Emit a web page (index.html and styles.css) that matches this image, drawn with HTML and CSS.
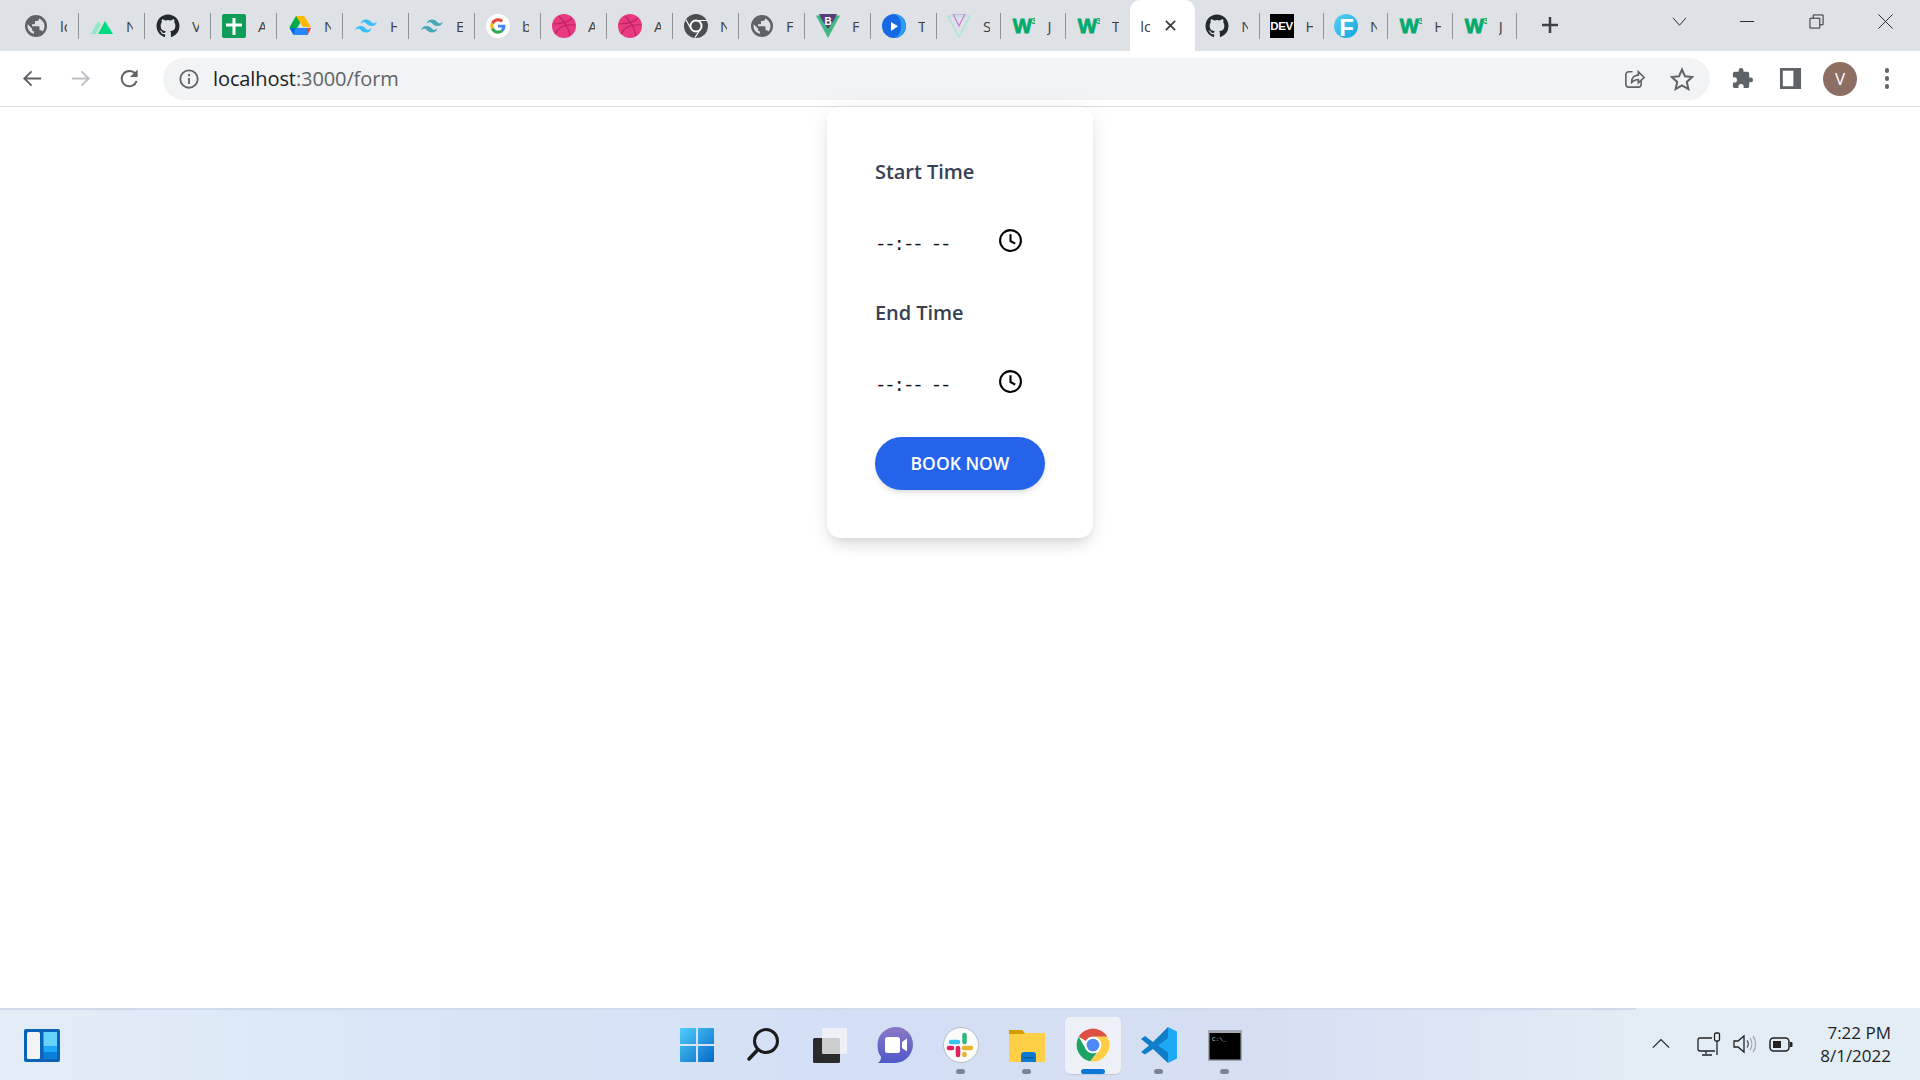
FILE: index.html
```html
<!DOCTYPE html>
<html lang="en">
<head>
<meta charset="utf-8">
<title>localhost:3000/form</title>
<link rel="stylesheet" href="styles.css">
</head>
<body>
<svg class="sprites" aria-hidden="true">
  <symbol id="i-globe" viewBox="0 0 24 24"><path fill="#5f6368" d="M12 1a11 11 0 100 22 11 11 0 000-22zM3.500 12c0-.6.1-1.200.2-1.800L8 14.500v1c0 1.100.9 2 2 2v2.200c-3.700-.6-6.500-3.800-6.500-7.700zm14.900 5.600c-.3-.8-1-1.400-1.900-1.400h-1v-3c0-.6-.4-1-1-1H8v-2h2c.6 0 1-.4 1-1V7h2c1.100 0 2-.9 2-2v-.4c3 1.200 5.500 4 5.500 7.400 0 2.100-.8 4.200-2.100 5.600z"/></symbol>
  <symbol id="i-nuxt" viewBox="0 0 24 24"><path fill="#8fe9c5" d="M1 20 8 7l3 3-5 10z"/><path fill="#00dc82" d="M8 20 15 7l8 13z"/></symbol>
  <symbol id="i-gh" viewBox="0 0 24 24"><path fill="#24292f" d="M12 .5C5.650.5.500 5.650.500 12c0 5.080 3.290 9.390 7.860 10.910.570.110.790-.250.790-.550v-2.140c-3.200.700-3.870-1.360-3.870-1.360-.520-1.330-1.280-1.690-1.280-1.690-1.040-.710.080-.700.080-.700 1.150.080 1.760 1.190 1.760 1.190 1.030 1.760 2.690 1.250 3.350.960.100-.750.400-1.250.730-1.540-2.560-.290-5.250-1.280-5.250-5.700 0-1.260.450-2.290 1.190-3.100-.120-.290-.520-1.460.110-3.050 0 0 .970-.310 3.170 1.180a11 11 0 015.770 0c2.200-1.490 3.170-1.180 3.170-1.180.630 1.590.230 2.760.110 3.050.740.810 1.190 1.840 1.190 3.100 0 4.430-2.700 5.410-5.270 5.690.410.360.780 1.060.780 2.140v3.170c0 .310.210.670.790.550A11.500 11.500 0 0023.500 12C23.500 5.650 18.350.5 12 .5z"/></symbol>
  <symbol id="i-plus" viewBox="0 0 24 24"><rect width="24" height="24" rx="2" fill="#0f9d58"/><path fill="#fff" d="M10.500 4h3v5.500H20v3h-6.500V21h-3v-8.500H4v-3h6.500z"/></symbol>
  <symbol id="i-drive" viewBox="0 0 24 24"><path fill="#00ac47" d="M8 2h8L6 20l-4.500-7z"/><path fill="#ffba00" d="M8 2h8l7 11h-8z"/><path fill="#2684fc" d="M5.500 14H23l-3.500 7H5.500z"/><path fill="#ea4335" d="M19 14h4l-3.500 7z"/><path fill="#0066da" d="M1.500 14h6l-2 7z"/></symbol>
  <symbol id="i-tw" viewBox="0 0 24 24"><path d="M12 5.500c-3 0-4.800 1.500-5.500 4.500 1.100-1.500 2.400-2 3.900-1.700.9.200 1.400.800 2.100 1.500 1 1 2.300 2.200 5 2.200 3 0 4.800-1.500 5.500-4.500-1.100 1.500-2.400 2-3.900 1.700-.9-.2-1.400-.8-2.100-1.500-1-1-2.300-2.200-5-2.200zM6.500 12c-3 0-4.800 1.500-5.500 4.500 1.100-1.500 2.400-2 3.900-1.700.9.200 1.400.800 2.100 1.500 1 1 2.300 2.200 5 2.200 3 0 4.800-1.500 5.500-4.500-1.100 1.500-2.400 2-3.900 1.700-.9-.2-1.400-.8-2.100-1.500-1-1-2.300-2.200-5-2.200z"/></symbol>
  <symbol id="i-google" viewBox="0 0 24 24"><circle cx="12" cy="12" r="12" fill="#fff"/><g transform="translate(4.300 4.300) scale(.32)"><path fill="#ea4335" d="M24 9.500c3.540 0 6.710 1.220 9.210 3.600l6.850-6.850C35.900 2.380 30.470 0 24 0 14.620 0 6.510 5.380 2.560 13.220l7.980 6.190C12.430 13.720 17.740 9.500 24 9.500z"/><path fill="#4285f4" d="M46.980 24.550c0-1.570-.15-3.090-.38-4.550H24v9.020h12.940c-.58 2.960-2.260 5.480-4.780 7.180l7.730 6c4.510-4.180 7.090-10.360 7.090-17.650z"/><path fill="#fbbc05" d="M10.530 28.590c-.48-1.450-.76-2.990-.76-4.590s.27-3.140.76-4.590l-7.980-6.190C.92 16.460 0 20.120 0 24c0 3.880.92 7.540 2.560 10.780l7.970-6.190z"/><path fill="#34a853" d="M24 48c6.480 0 11.930-2.130 15.890-5.810l-7.730-6c-2.150 1.450-4.920 2.300-8.160 2.300-6.260 0-11.570-4.220-13.470-9.910l-7.980 6.190C6.510 42.620 14.620 48 24 48z"/></g></symbol>
  <symbol id="i-dribbble" viewBox="0 0 24 24"><circle cx="12" cy="12" r="12" fill="#e9397f"/><path fill="none" stroke="#b9225f" stroke-width="1.100" d="M7 2c5 5 10 13 11 20M1 10c8 0 15-2 19-6M3 20c3-6 10-10 20-9"/></symbol>
  <symbol id="i-chrome-gray" viewBox="0 0 24 24"><circle cx="12" cy="12" r="12" fill="#4a4d51"/><circle cx="12" cy="12" r="6.500" fill="#fff"/><circle cx="12" cy="12" r="4.600" fill="#4a4d51"/><path stroke="#fff" stroke-width="1.200" d="M12 6.500h11M7 15 1.800 5.500M16.500 15 11 23.500"/></symbol>
  <symbol id="i-bvue" viewBox="0 0 24 24"><path fill="#41b883" d="M0 1.500h24L12 24z"/><path fill="#fff" d="M5.500 1.500h13L12 13.500z"/><path fill="#563d7c" d="M3 0h18l-3 6-6 9-6-9z"/><text x="12" y="10.500" class="bv-text">B</text></symbol>
  <symbol id="i-play" viewBox="0 0 24 24"><circle cx="12" cy="12" r="12" fill="#1668e3"/><path fill="#2c9bf0" d="M12 0a12 12 0 010 24c5-2 7-6 7-12S17 2 12 0z"/><path fill="#fff" d="M9 8l7 4.300L9 17z"/></symbol>
  <symbol id="i-vue" viewBox="0 0 24 24"><path fill="none" stroke="#a4e6d5" stroke-width="1.200" d="M1 2h22L12 23z"/><path fill="none" stroke="#c57fe0" stroke-width="1.200" d="M6 0h12l-6 12z"/></symbol>
  <symbol id="i-w3" viewBox="-3 0 26 24"><text x="-1" y="19.500" class="w3-w">W</text><text x="19" y="9.500" class="w3-3">3</text></symbol>
  <symbol id="i-clock" viewBox="0 0 24 24"><circle cx="12" cy="12" r="10" fill="none" stroke="#000" stroke-width="2"/><path fill="none" stroke="#000" stroke-width="2" d="M12 6v6.500l4.500 2.500"/></symbol>
</svg>

<div class="browser">
  <header class="tabstrip">
    <div class="tab"><svg class="fav"><use href="#i-globe"/></svg><span class="tab-title">lo</span></div>
    <div class="tab"><svg class="fav"><use href="#i-nuxt"/></svg><span class="tab-title">N</span></div>
    <div class="tab"><svg class="fav"><use href="#i-gh"/></svg><span class="tab-title">V</span></div>
    <div class="tab"><svg class="fav"><use href="#i-plus"/></svg><span class="tab-title">A</span></div>
    <div class="tab"><svg class="fav"><use href="#i-drive"/></svg><span class="tab-title">N</span></div>
    <div class="tab"><svg class="fav tw-sky"><use href="#i-tw"/></svg><span class="tab-title">H</span></div>
    <div class="tab"><svg class="fav tw-teal"><use href="#i-tw"/></svg><span class="tab-title">E</span></div>
    <div class="tab"><svg class="fav"><use href="#i-google"/></svg><span class="tab-title">b</span></div>
    <div class="tab"><svg class="fav"><use href="#i-dribbble"/></svg><span class="tab-title">A</span></div>
    <div class="tab"><svg class="fav"><use href="#i-dribbble"/></svg><span class="tab-title">A</span></div>
    <div class="tab"><svg class="fav"><use href="#i-chrome-gray"/></svg><span class="tab-title">N</span></div>
    <div class="tab"><svg class="fav"><use href="#i-globe"/></svg><span class="tab-title">F</span></div>
    <div class="tab"><svg class="fav"><use href="#i-bvue"/></svg><span class="tab-title">F</span></div>
    <div class="tab"><svg class="fav"><use href="#i-play"/></svg><span class="tab-title">T</span></div>
    <div class="tab narrow"><svg class="fav"><use href="#i-vue"/></svg><span class="tab-title">S</span></div>
    <div class="tab narrow"><svg class="fav"><use href="#i-w3"/></svg><span class="tab-title">J</span></div>
    <div class="tab narrow no-sep"><svg class="fav"><use href="#i-w3"/></svg><span class="tab-title">T</span></div>
    <div class="tab active"><span class="tab-title">lo</span><svg class="tab-close" viewBox="0 0 14 14"><path d="M2 2l10 10M12 2L2 12"/></svg></div>
    <div class="tab narrow"><svg class="fav"><use href="#i-gh"/></svg><span class="tab-title">N</span></div>
    <div class="tab narrow"><span class="fav dev">DEV</span><span class="tab-title">H</span></div>
    <div class="tab narrow"><svg class="fav" viewBox="0 0 24 24"><defs><linearGradient id="g-fr" x1="0" y1="0" x2="1" y2="1"><stop offset="0" stop-color="#5fd0f2"/><stop offset="1" stop-color="#0ea4dc"/></linearGradient></defs><circle cx="12" cy="12" r="12" fill="url(#g-fr)"/><text x="12.500" y="22" class="fr-text">F</text></svg><span class="tab-title">N</span></div>
    <div class="tab narrow"><svg class="fav"><use href="#i-w3"/></svg><span class="tab-title">H</span></div>
    <div class="tab narrow"><svg class="fav"><use href="#i-w3"/></svg><span class="tab-title">J</span></div>
    <svg class="new-tab" viewBox="0 0 18 18"><path d="M9 1v16M1 9h16"/></svg>
    <div class="window-controls">
      <svg class="win-btn" viewBox="0 0 16 16"><path d="M1 4l7 8 7-8"/></svg>
      <svg class="win-btn" viewBox="0 0 16 16"><path d="M0 8h15"/></svg>
      <svg class="win-btn" viewBox="0 0 16 16"><path d="M1 4.500h10.500V15H1zM4.500 4.500V1H15v10.500h-3.500"/></svg>
      <svg class="win-btn" viewBox="0 0 16 16"><path d="M.5.500l15 15M15.500.5l-15 15"/></svg>
    </div>
  </header>

  <nav class="toolbar">
    <svg class="tool back" viewBox="0 0 24 24"><path d="M21 12H4M11 4.500 3.500 12l7.500 7.500"/></svg>
    <svg class="tool forward" viewBox="0 0 24 24"><path d="M3 12h17M13 4.500l7.500 7.500-7.500 7.500"/></svg>
    <svg class="tool reload" viewBox="0 0 24 24"><path d="M19.500 14.500A8 8 0 1 1 18 7"/><path class="solid" d="M20.500 2.500v8h-8z"/></svg>
    <div class="omnibox">
      <svg class="tool info" viewBox="0 0 24 24"><circle cx="12" cy="12" r="9.500"/><path d="M12 11v6.500M12 6.500v2.500"/></svg>
      <div class="url"><span class="url-host">localhost</span>:3000/form</div>
      <svg class="tool share" viewBox="0 0 24 24"><path d="M10 5H6a3 3 0 0 0-3 3v10a3 3 0 0 0 3 3h10a3 3 0 0 0 3-3v-4"/><path d="M9 16c0-5 3-7.500 7-7.500V5l6 6-6 5.500V13c-3 0-5 1-7 3z"/></svg>
      <svg class="tool star" viewBox="0 0 24 24"><path d="M12 2.500l3 6.800 7.200.7-5.400 4.900 1.600 7.200L12 18.400l-6.400 3.700 1.600-7.200L1.800 10l7.200-.7z"/></svg>
    </div>
    <svg class="tool puzzle" viewBox="0 0 24 24"><path class="solid" d="M20.500 11H19V7a2 2 0 0 0-2-2h-4V3.500a2.500 2.500 0 0 0-5 0V5H4a2 2 0 0 0-2 2v3.800h1.500a2.700 2.700 0 0 1 0 5.400H2V20a2 2 0 0 0 2 2h3.800v-1.500a2.700 2.700 0 0 1 5.400 0V22H17a2 2 0 0 0 2-2v-4h1.500a2.500 2.500 0 0 0 0-5z"/></svg>
    <svg class="tool panel" viewBox="0 0 24 24"><path class="solid" fill-rule="evenodd" d="M1 1h22v22H1zM4 4v16h11V4z"/></svg>
    <div class="avatar">V</div>
    <div class="kebab"><span></span><span></span><span></span></div>
  </nav>

  <main class="page">
    <form class="card">
      <div class="field">
        <label class="field-label">Start Time</label>
        <div class="time-row"><span class="time-value">--:-- --</span><svg class="clock"><use href="#i-clock"/></svg></div>
      </div>
      <div class="field">
        <label class="field-label">End Time</label>
        <div class="time-row"><span class="time-value">--:-- --</span><svg class="clock"><use href="#i-clock"/></svg></div>
      </div>
      <button class="book" type="button">BOOK NOW</button>
    </form>
  </main>

  <footer class="taskbar">
    <div class="taskbar-edge"></div>
    <div class="taskbar-row">
      <div class="task-left">
        <svg class="widgets" viewBox="0 0 36 33">
          <rect width="36" height="33" rx="2" fill="#0a63b4"/>
          <rect x="3" y="3" width="13" height="27" rx="1.500" fill="#f3f3f3"/>
          <rect x="19.500" y="3" width="13.500" height="14" fill="#66d3ff"/>
          <rect x="19.500" y="17" width="13.500" height="6" fill="#1ea7f5"/>
          <rect x="19.500" y="23" width="13.500" height="7" fill="#0a7fd9"/>
        </svg>
      </div>
      <div class="task-center">
        <div class="task-item">
          <svg class="task-icon" viewBox="0 0 36 36">
            <defs><linearGradient id="g-win" x1="0" y1="0" x2="1" y2="1"><stop offset="0" stop-color="#4fcdfb"/><stop offset="1" stop-color="#0668c7"/></linearGradient></defs>
            <path fill="url(#g-win)" d="M1 2a1 1 0 0 1 1-1h15v16H1zM19 1h15a1 1 0 0 1 1 1v15H19zM1 19h16v16H2a1 1 0 0 1-1-1zM19 19h16v15a1 1 0 0 1-1 1H19z"/>
          </svg>
        </div>
        <div class="task-item">
          <svg class="task-icon" viewBox="0 0 36 36"><circle cx="21" cy="14" r="11.500" fill="none" stroke="#1c1c1c" stroke-width="3"/><path fill="none" stroke="#1c1c1c" stroke-width="3.500" stroke-linecap="round" d="M12.500 23 4 32"/></svg>
        </div>
        <div class="task-item">
          <svg class="task-icon" viewBox="0 0 36 36"><rect x="2" y="11" width="27" height="25" rx="1.500" fill="#2b2b2b"/><rect x="11" y="1" width="26" height="26" rx="1" fill="#f4f5f8" fill-opacity=".8"/></svg>
        </div>
        <div class="task-item">
          <svg class="task-icon" viewBox="0 0 36 36">
            <defs><linearGradient id="g-chat" x1="0" y1="0" x2="0" y2="1"><stop offset="0" stop-color="#8b78c6"/><stop offset="1" stop-color="#4f58c9"/></linearGradient></defs>
            <path fill="url(#g-chat)" d="M19 0c9.500 0 17 7.500 17 17.500S28 36 18 36H1c2-2 3-3 3-6C1 26 .5 22 .5 17.500.5 7.500 9 0 19 0z"/>
            <rect x="8" y="10" width="15" height="16" rx="2.500" fill="#fff"/><path fill="#fff" d="M25 15l5-3.500v13L25 21z"/>
          </svg>
        </div>
        <div class="task-item">
          <svg class="task-icon" viewBox="0 0 36 36">
            <circle cx="18" cy="18" r="17.500" fill="#fbfbfb" stroke="#b5bcc8"/>
            <path fill="none" stroke="#36c5f0" stroke-width="4.500" stroke-linecap="round" d="M8 15h7"/><path fill="none" stroke="#2eb67d" stroke-width="4.500" stroke-linecap="round" d="M21.500 8v7"/>
            <path fill="none" stroke="#ecb22e" stroke-width="4.500" stroke-linecap="round" d="M21 21h7"/><path fill="none" stroke="#e01e5a" stroke-width="4.500" stroke-linecap="round" d="M15 21v7M6 21h3"/>
            <path fill="none" stroke="#ecb22e" stroke-width="4.500" stroke-linecap="round" d="M21.500 27v1"/>
          </svg>
        </div>
        <div class="task-item">
          <svg class="task-icon" viewBox="0 0 36 36">
            <path fill="#d79b00" d="M0 3h13l3 3h20v6H0z"/><path fill="#ffcf48" d="M0 7h14l2-1h20v29H0z"/>
            <path fill="#0b7ad1" d="M12 35V28a3 3 0 0 1 3-3h9a3 3 0 0 1 3 3v7z"/><rect x="14" y="30" width="11" height="1.500" fill="#075a9c"/>
          </svg>
        </div>
        <div class="task-item active">
          <svg class="task-icon chrome" viewBox="0 0 48 48">
            <circle cx="24" cy="24" r="22" fill="#fff"/>
            <path fill="#dd5144" d="M5 13A22 22 0 0 1 43 13H24a11 11 0 0 0-9.500 5.500z"/>
            <path fill="#1da462" d="M5 13A22 22 0 0 0 20.500 45.700L29.500 33.500A11 11 0 0 1 14.500 29.500z"/>
            <path fill="#ffcd46" d="M24 13H43A22 22 0 0 1 20.500 45.700L33.500 29.500A11 11 0 0 0 24 13z"/>
            <circle cx="24" cy="24" r="11" fill="#fff"/><circle cx="24" cy="24" r="8.500" fill="#4c8bf5"/>
          </svg>
        </div>
        <div class="task-item">
          <svg class="task-icon" viewBox="0 0 36 36">
            <path fill="#0f7dc7" d="M27 0 12 15 4 9 0 12l8 6.500L0 25l4 2.500 8-5.500 15 14z"/>
            <path fill="#1fa9f4" d="M27 0l9 4.500v27L27 36V11l-10 7.500 10 7z"/>
          </svg>
        </div>
        <div class="task-item">
          <svg class="task-icon" viewBox="0 0 36 36">
            <rect x="1" y="3" width="34" height="31" fill="#a3a9b2"/><rect x="2.500" y="6" width="31" height="26.500" fill="#000"/>
            <text x="5" y="13.500" class="cmd-text">C:\_</text>
          </svg>
        </div>
      </div>
      <div class="task-right">
        <svg class="tray chevron" viewBox="0 0 20 20"><path d="M1 14l9-9 9 9"/></svg>
        <svg class="tray monitor" viewBox="0 0 24 24"><path d="M15 6H3a2 2 0 0 0-2 2v9a2 2 0 0 0 2 2h15M9 19v3M5 23h10M20 9v14"/><rect x="17.500" y="1" width="5" height="8" rx="1.500"/></svg>
        <svg class="tray volume" viewBox="0 0 24 24"><path d="M1 9v6h4l6 5V4L5 9z"/><path class="faint-1" d="M14 8.500c1.500 2 1.500 5 0 7"/><path class="faint-2" d="M17 6c2.500 3.500 2.500 8.500 0 12M20 4c3.500 4.500 3.500 11.500 0 16"/></svg>
        <svg class="tray battery" viewBox="0 0 24 24"><rect x="1" y="6" width="19" height="13" rx="3.500"/><rect class="solid-tray" x="4" y="9" width="8" height="7"/><path class="solid-tray" d="M21 10h1.500a1 1 0 0 1 1 1v3a1 1 0 0 1-1 1H21z"/></svg>
        <div class="clock-text"><span>7:22 PM</span><span>8/1/2022</span></div>
      </div>
    </div>
  </footer>
</div>
</body>
</html>
```
FILE: styles.css
```css
* { box-sizing: border-box; }
html, body { margin: 0; height: 100%; }
body { font-family: "Open Sans", "Noto Sans", sans-serif; background: #fff; overflow: hidden; }
.sprites { display: none; }
.browser { display: flex; flex-direction: column; height: 1080px; width: 1920px; }

/* tab strip */
.tabstrip { height: 51px; flex: none; background: #dee1e6; display: flex; padding-left: 13px; }
.tab { position: relative; width: 66px; height: 51px; flex: none; display: flex; align-items: center; padding-left: 11px; }
.tab.narrow { width: 64.4px; padding-left: 10px; }
.tab::after { content: ""; position: absolute; right: 0; top: 13px; height: 26px; width: 1px; background: #8f9398; }
.tab.no-sep::after, .tab.active::after { display: none; }
.fav { width: 24px; height: 24px; flex: none; display: block; }
.tab-title { margin-left: 12px; width: 7px; overflow: hidden; font-size: 15px; color: #3c4043; white-space: nowrap; }
.tab.active { width: 65px; background: #fff; border-radius: 10px 10px 0 0; padding-left: 10px; }
.tab.active .tab-title { margin: 0; width: 10px; }
.tab-close { width: 13px; height: 13px; margin-left: 14px; fill: none; stroke: #3c4043; stroke-width: 2; }
.tw-sky { fill: #38bdf8; }
.tw-teal { fill: #45a9b5; }
.dev { background: #000; color: #fff; font-family: "Liberation Sans", sans-serif; font-weight: 700; font-size: 11.500px; line-height: 24px; text-align: center; letter-spacing: -.3px; height: 24px; width: 24px; }
.bv-text { font: 700 10px "Liberation Sans", sans-serif; fill: #fff; text-anchor: middle; }
.w3-w { font: 900 22px "Liberation Sans", sans-serif; fill: #04aa6d; stroke: #04aa6d; stroke-width: .9; letter-spacing: -1px; }
.w3-3 { font: 700 10px "Liberation Sans", sans-serif; fill: #04aa6d; }
.fr-text { font: 700 24px "Liberation Sans", sans-serif; fill: #fff; text-anchor: middle; }
.new-tab { width: 18px; height: 18px; margin: 16px 0 0 24px; flex: none; fill: none; stroke: #3c4043; stroke-width: 2.500; }
.window-controls { margin-left: auto; display: flex; gap: 53.800px; padding: 14px 27px 0 0; }
.win-btn { width: 15px; height: 15px; fill: none; stroke: #222; stroke-width: 1; flex: none; }

/* toolbar */
.toolbar { height: 56px; flex: none; background: #fff; border-bottom: 1.500px solid #dcdcdc; display: flex; align-items: center; padding: 0 0 0 21px; }
.tool { width: 23px; height: 23px; flex: none; fill: none; stroke: #5f6368; stroke-width: 2; }
.tool .solid { fill: #5f6368; stroke: none; }
.forward { stroke: #bdc1c6; margin-left: 25px; }
.reload { margin-left: 26px; }
.omnibox { margin-left: 22px; width: 1547px; height: 42px; border-radius: 21px; background: #f1f3f4; display: flex; align-items: center; padding: 0 16px 0 15px; }
.info { width: 22px; height: 22px; }
.url { margin-left: 13px; flex: 1; font-size: 20px; color: #5f6368; letter-spacing: -.1px; }
.url-host { color: #202124; }
.share { stroke-width: 1.700; margin-right: 24px; }
.star { width: 24px; height: 24px; }
.puzzle { margin-left: 21px; }
.panel { margin-left: 25px; }
.avatar { margin-left: 21px; width: 34px; height: 34px; border-radius: 50%; background: #8d6e63; color: #fff; font-size: 17px; display: flex; align-items: center; justify-content: center; flex: none; }
.kebab { margin-left: 27.500px; display: flex; flex-direction: column; gap: 3.500px; }
.kebab span { width: 4.500px; height: 4.500px; border-radius: 50%; background: #5f6368; }

/* page */
.page { flex: 1; display: flex; justify-content: center; align-items: flex-start; background: #fff; }
.card { position: relative; width: 266px; padding: 48px; background: #fff; border-radius: 14px; box-shadow: 0 10px 15px -3px rgba(0,0,0,.1), 0 4px 6px -2px rgba(0,0,0,.05), 0 0 24px rgba(0,0,0,.05); }
.field { height: 141px; }
.field-label { display: block; height: 34px; line-height: 34px; font-size: 20px; font-weight: 550; letter-spacing: -.05px; color: #374151; white-space: nowrap; }
.time-row { margin-top: 30px; width: 148px; height: 47px; display: flex; align-items: center; justify-content: space-between; }
.time-value { font-family: "Liberation Mono", monospace; font-size: 19px; color: #111; margin-top: 4px; letter-spacing: -2.100px; white-space: pre; }
.clock { width: 25px; height: 25px; flex: none; margin-top: -5px; }
.book { display: block; width: 170px; height: 53px; padding: 0 0 2px; border: 0; border-radius: 27px; background: #2563eb; color: #fff; font: 600 17.500px "Open Sans", sans-serif; box-shadow: 0 4px 6px -1px rgba(0,0,0,.1), 0 2px 4px -1px rgba(0,0,0,.06); }

/* taskbar */
.taskbar { height: 72px; flex: none; background: linear-gradient(90deg, #e3edf7 0%, #d9e5f6 25%, #d3dff5 45%, #d6dff2 65%, #e2ecf5 85%, #e3edf6 100%); display: flex; flex-direction: column; }
.taskbar-edge { width: 1636px; height: 2px; flex: none; background: #cfdaea; }
.taskbar-row { flex: 1; display: grid; grid-template-columns: 1fr auto 1fr; align-items: center; }
.task-left { padding-left: 24px; display: flex; align-items: center; }
.widgets { width: 36px; height: 33px; }
.task-center { display: flex; padding-left: 1px; }
.task-item { position: relative; width: 66px; height: 56px; display: flex; align-items: center; justify-content: center; }
.task-icon { width: 36px; height: 36px; margin-top: -1px; }
.task-item::after { content: ""; position: absolute; left: 28.500px; bottom: -1px; width: 9px; height: 5px; border-radius: 3px; background: #7b8494; }
.task-item:nth-child(-n+4)::after { display: none; }
.task-item.active::before { content: ""; position: absolute; left: 5px; top: 0; width: 56px; height: 57px; border-radius: 5px; background: #eef0f7; box-shadow: 0 1px 1px rgba(0,0,0,.1); }
.task-item.active .task-icon { position: relative; }
.task-item.active::after { left: 21px; width: 24px; background: #0a78d4; }
.cmd-text { font: 6px "Liberation Mono", monospace; fill: #ccc; }
.task-right { display: flex; align-items: center; justify-content: flex-end; padding-right: 29px; }
.tray { fill: none; stroke: #222; stroke-width: 1.300; flex: none; width: 24px; height: 24px; margin-top: -2px; }
.chevron { width: 18px; height: 18px; margin-right: 27px; }
.volume { margin-left: 12px; }
.faint-1 { stroke: #555; }
.faint-2 { stroke: #aaa; }
.battery { margin-left: 12px; stroke-width: 1.500; }
.solid-tray { fill: #222; stroke: none; }
.clock-text { margin-left: 27.400px; display: flex; flex-direction: column; align-items: flex-end; font-size: 17px; line-height: 23px; color: #1f1f1f; margin-top: -3px; }
```
